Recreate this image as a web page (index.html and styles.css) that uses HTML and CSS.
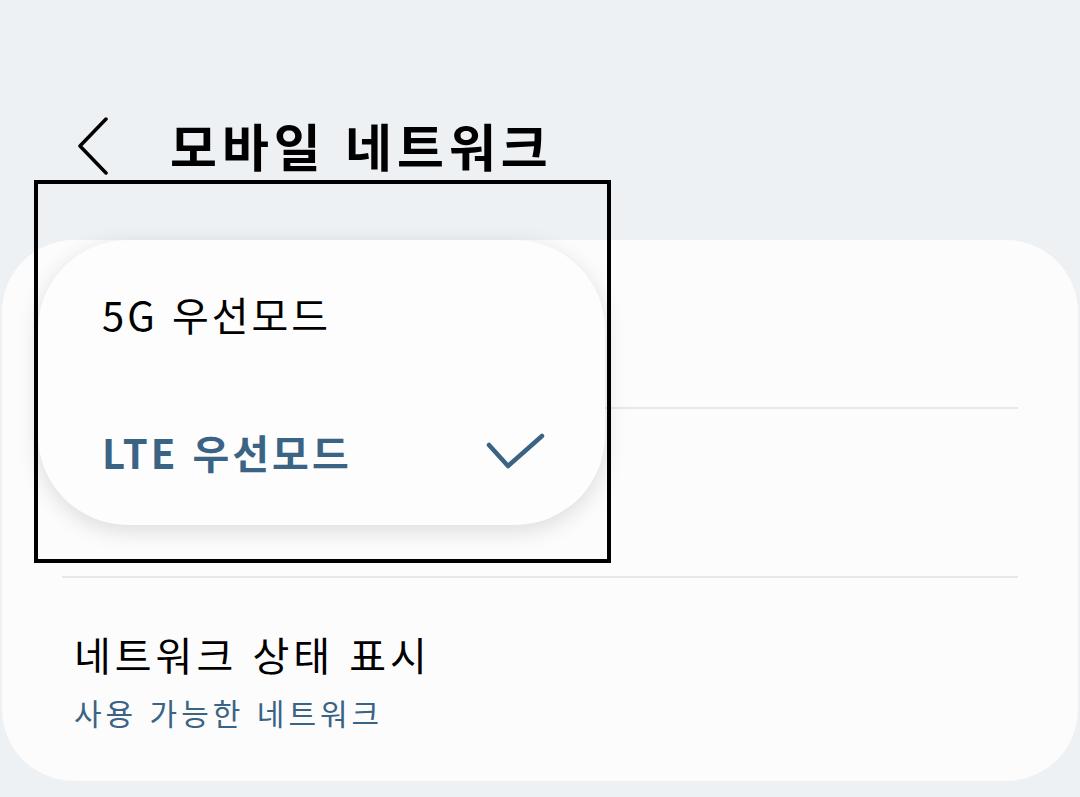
FILE: index.html
```html
<!DOCTYPE html>
<html lang="ko">
<head>
  <meta charset="UTF-8" />
  <title>모바일 네트워크</title>
  <link rel="stylesheet" href="styles.css">
</head>
<body>
  <header class="top-bar">
    <svg class="back-icon" width="40" height="60" viewBox="0 0 40 60">
      <polyline points="30,4 4,31 30,58" fill="none" stroke="#000" stroke-width="3.5" stroke-linecap="round" stroke-linejoin="round"/>
    </svg>
    <h1>모바일 네트워크</h1>
  </header>

  <main class="card">
    <div class="row row-first"></div>
    <div class="row row-second"></div>
    <div class="row row-last">
      <div class="row-title">네트워크 상태 표시</div>
      <div class="row-sub">사용 가능한 네트워크</div>
    </div>
  </main>

  <!-- Dropdown popup over the network mode row -->
  <div class="popup">
    <div class="popup-item">5G 우선모드</div>
    <div class="popup-item selected">
      <span>LTE 우선모드</span>
      <svg width="62" height="40" viewBox="0 0 62 40">
        <polyline points="4,13 23,34 57,4" fill="none" stroke="#3b6384" stroke-width="4.5" stroke-linecap="round" stroke-linejoin="round"/>
      </svg>
    </div>
  </div>

  <div class="highlight-box"></div>
</body>
</html>
```

FILE: styles.css
```css
* {
  box-sizing: border-box;
  margin: 0;
  padding: 0;
}

body {
  background: #eef1f4;
  font-family: "Noto Sans CJK KR", "Noto Sans", sans-serif;
  width: 1080px;
  height: 797px;
  overflow: hidden;
  position: relative;
  color: #000;
}

.top-bar {
  display: flex;
  align-items: center;
  height: 240px;
  padding: 50px 0 0 76px;
}

.back-icon {
  margin-right: 54px;
}

h1 {
  font-size: 51px;
  font-weight: 700;
  letter-spacing: 5px;
  line-height: 1;
}

.card {
  background: #fcfcfc;
  border-radius: 72px;
  margin: 0 2px 0 2px;
  height: 541px;
  padding: 0 60px;
}

.row {
  border-bottom: 2px solid #e8e8e8;
}

.row-first {
  height: 169px;
}

.row-second {
  height: 169px;
}

.row.row-last {
  border-bottom: none;
  padding: 50px 0 0 12px;
}

.row-title {
  font-size: 40px;
  line-height: 52px;
  letter-spacing: 4px;
}

.row-sub {
  font-size: 30px;
  line-height: 44px;
  color: #3b6384;
  letter-spacing: 4px;
  margin-top: 10px;
}

/* popup */
.popup {
  position: absolute;
  left: 38px;
  top: 240px;
  width: 567px;
  height: 285px;
  background: #fdfdfd;
  border-radius: 90px;
  box-shadow: 0 6px 22px rgba(0, 0, 0, 0.13);
  display: flex;
  flex-direction: column;
  justify-content: center;
  padding: 0 58px 0 64px;
}

.popup-item {
  height: 138px;
  display: flex;
  align-items: center;
  justify-content: space-between;
  font-size: 40px;
  letter-spacing: 3px;
}

.popup-item.selected {
  color: #3b6384;
  font-weight: 700;
}

.highlight-box {
  position: absolute;
  left: 34px;
  top: 180px;
  width: 577px;
  height: 383px;
  border: 4px solid #000;
}
```
